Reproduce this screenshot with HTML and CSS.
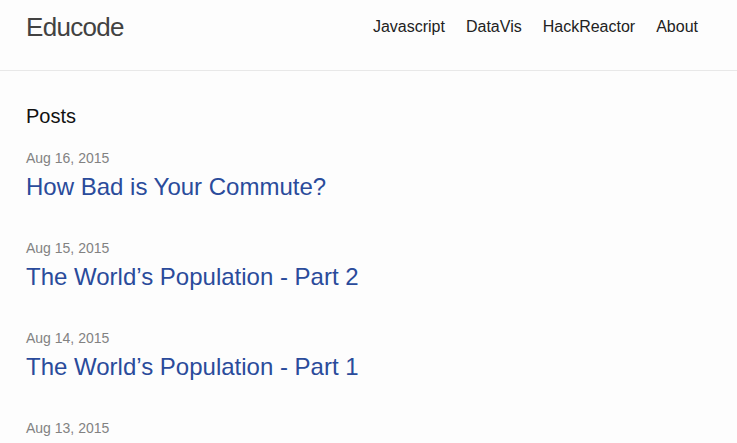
FILE: index.html
```html
<!DOCTYPE html>
<html>
<head>
<meta charset="utf-8">
<link rel="stylesheet" href="styles.css">
</head>
<body>
<header class="site-header">
  <div class="wrapper header-inner">
    <a class="site-title" href="#">Educode</a>
    <nav class="site-nav">
      <a class="page-link" href="#">Javascript</a>
      <a class="page-link" href="#">DataVis</a>
      <a class="page-link" href="#">HackReactor</a>
      <a class="page-link" href="#">About</a>
    </nav>
  </div>
</header>
<main class="page-content">
  <div class="wrapper">
    <h1 class="page-heading">Posts</h1>
    <ul class="post-list">
      <li><span class="post-meta">Aug 16, 2015</span><h2><a class="post-link" href="#">How Bad is Your Commute?</a></h2></li>
      <li><span class="post-meta">Aug 15, 2015</span><h2><a class="post-link" href="#">The World’s Population - Part 2</a></h2></li>
      <li><span class="post-meta">Aug 14, 2015</span><h2><a class="post-link" href="#">The World’s Population - Part 1</a></h2></li>
      <li><span class="post-meta">Aug 13, 2015</span></li>
    </ul>
  </div>
</main>
</body>
</html>
```
FILE: styles.css
```css
* { box-sizing: border-box; }
html, body { margin: 0; padding: 0; }
body {
  font-family: "Liberation Sans", Arial, sans-serif;
  font-size: 16px;
  line-height: 1.5;
  color: #111;
  background: #fdfdfd;
  overflow: hidden;
}
a { text-decoration: none; }
.wrapper { padding: 0 39px 0 26px; }
.site-header {
  border-bottom: 1px solid #e8e8e8;
  height: 71px;
}
.header-inner {
  display: flex;
  justify-content: space-between;
  align-items: flex-start;
}
.site-title {
  font-size: 26px;
  line-height: 54px;
  letter-spacing: -0.7px;
  color: #424242;
}
.site-nav { display: flex; gap: 21px; }
.page-link {
  color: #222;
  line-height: 54px;
  font-size: 16px;
}
.page-content { padding-top: 30px; }
.page-heading {
  font-size: 20px;
  font-weight: normal;
  margin: 0 0 17px;
  line-height: 30px;
}
.post-list { list-style: none; margin: 0; padding: 0; }
.post-list li { margin-bottom: 33px; }
.post-meta { font-size: 14px; color: #828282; display: block; line-height: 21px; }
.post-list h2 { margin: 0; font-weight: normal; font-size: 24px; line-height: 36px; }
.post-link { color: #2a4b9b; display: block; }
```
